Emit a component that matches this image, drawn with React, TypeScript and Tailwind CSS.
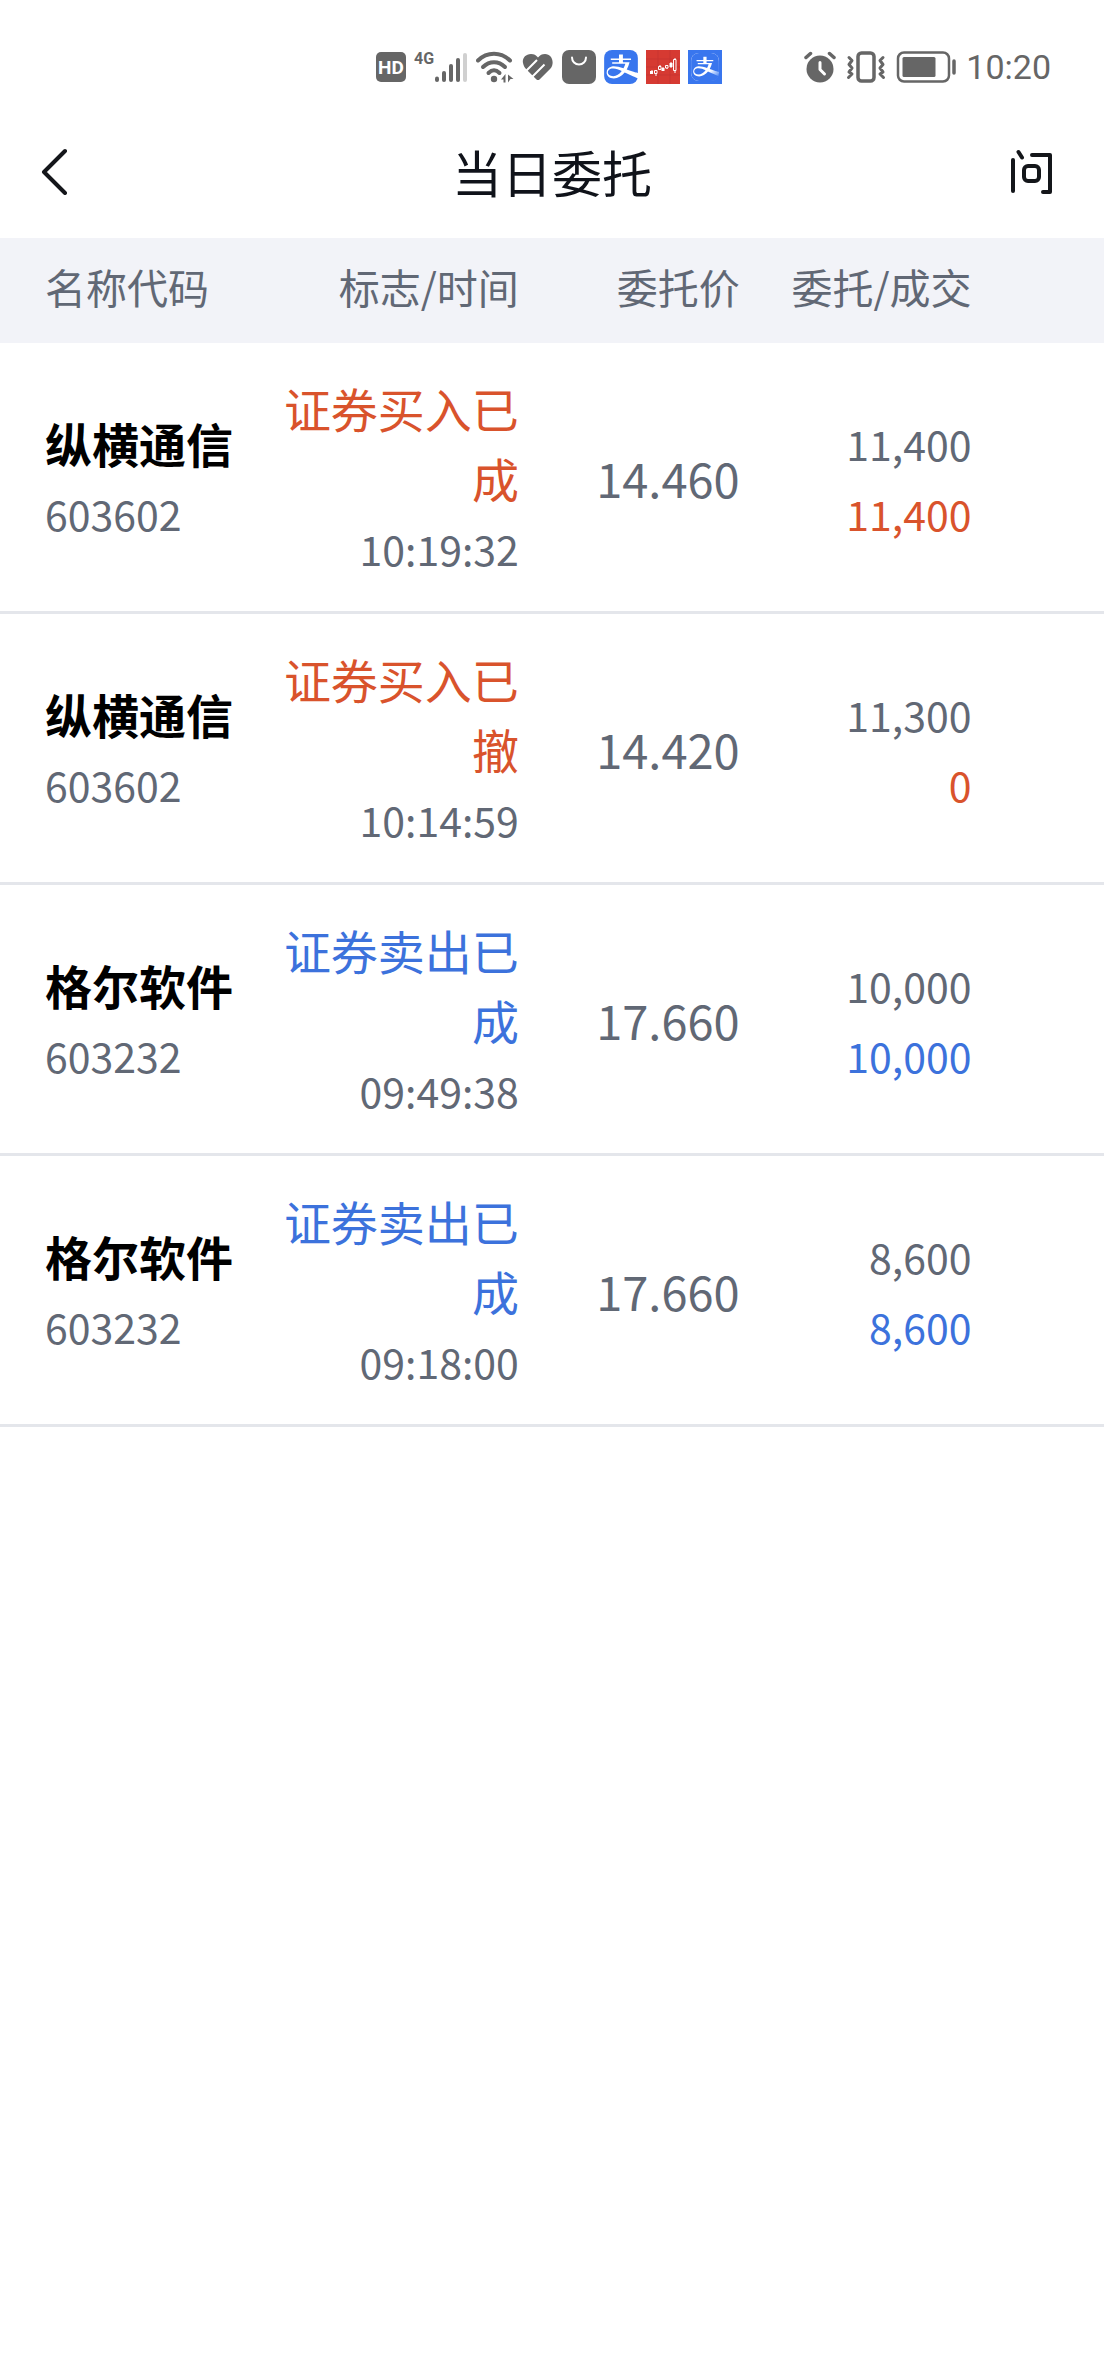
import { SiAlipay } from "react-icons/si";

type Side = "buy" | "sell";

type Order = {
  name: string;
  code: string;
  side: Side;
  status: string;
  time: string;
  price: string;
  ordered: string;
  filled: string;
};

const orders: Order[] = [
  { name: "纵横通信", code: "603602", side: "buy", status: "证券买入已成", time: "10:19:32", price: "14.460", ordered: "11,400", filled: "11,400" },
  { name: "纵横通信", code: "603602", side: "buy", status: "证券买入已撤", time: "10:14:59", price: "14.420", ordered: "11,300", filled: "0" },
  { name: "格尔软件", code: "603232", side: "sell", status: "证券卖出已成", time: "09:49:38", price: "17.660", ordered: "10,000", filled: "10,000" },
  { name: "格尔软件", code: "603232", side: "sell", status: "证券卖出已成", time: "09:18:00", price: "17.660", ordered: "8,600", filled: "8,600" },
];

const sideColor: Record<Side, string> = {
  buy: "text-[#d9532c]",
  sell: "text-[#3c72dc]",
};

function HdIcon() {
  return (
    <span className="flex h-[30px] w-[30px] items-center justify-center rounded-[5px] bg-[#666] font-[Roboto] text-[19px] font-bold leading-none text-white">
      HD
    </span>
  );
}

function SignalIcon() {
  return (
    <span className="flex h-8 items-start">
      <span className="font-[Roboto] text-[16px] font-bold leading-[16px] text-[#666]">4G</span>
      <svg width="34" height="32" viewBox="0 0 34 32" fill="none" strokeWidth="4" strokeLinecap="round" aria-hidden="true">
        <g stroke="#666">
          <path d="M3 27.500v1.500" />
          <path d="M10 22v7" />
          <path d="M17 15v14" />
          <path d="M24 9v20" />
        </g>
        <path d="M31 4v25" stroke="#d0d0d0" />
      </svg>
    </span>
  );
}

function WifiIcon() {
  return (
    <svg width="38" height="32" viewBox="0 0 38 32" fill="none" stroke="#666" strokeWidth="4" strokeLinecap="round" aria-hidden="true">
      <path d="M2 9.500C11 0.500 25 0.500 34 9.500" />
      <path d="M7 16C13.500 9.500 22.500 9.500 29 16" />
      <path d="M12.500 22C16 18.500 20 18.500 23.500 22" />
      <circle cx="18" cy="28" r="3.200" fill="#666" stroke="none" />
      <path d="M29.500 23v8.500h-2v-3h-2.500zM32 23.500l5.500 4.500h-3l-2.500 3.500z" fill="#666" stroke="none" />
    </svg>
  );
}

function HealthIcon() {
  return (
    <svg width="32" height="28" viewBox="0 0 32 28" fill="none" aria-hidden="true">
      <path
        d="M9 1C3 1 0 6 1 10C1.500 13 3 15 5 17L14.500 26.500Q16 27.500 17.500 26.500L28.500 15.500C33 10 30 1 23 1C20 1 18 2 16 4.500C14 2 12 1 9 1Z"
        fill="#666"
      />
      <path d="M3 19L15 7M9 25L22.500 11.500" stroke="#fff" strokeWidth="2" />
    </svg>
  );
}

function BagIcon() {
  return (
    <svg width="34" height="34" viewBox="0 0 34 34" fill="none" aria-hidden="true">
      <rect width="34" height="34" rx="7" fill="#666" />
      <path d="M10 7.500a7 7 0 0 0 14 0" stroke="#fff" strokeWidth="2" strokeLinecap="round" />
    </svg>
  );
}

function StocksIcon() {
  return (
    <svg width="34" height="34" viewBox="0 0 34 34" fill="none" aria-hidden="true">
      <rect width="34" height="34" fill="#d63a32" />
      <path d="M0 9h34M0 17h34M0 25h34M12 0v34M24 0v34" stroke="#c93530" />
      <path d="M6 20v4M10 20v6M14 15v5M17 17v4M21 15v4M25 12v6M29 8v15" stroke="#fff" />
      <path d="M4 21h3v3H4zM15.500 18h3v3h-3zM23.500 13h3v4h-3z" fill="#fff" />
      <path d="M8.500 20.500h2.500v3H8.500zM12.500 16.500h2.500v3h-2.500zM19.500 15.500h2.500v2.500h-2.500zM27.500 9.500h2.500v11h-2.500z" fill="#d63a32" stroke="#fff" />
    </svg>
  );
}

function AlarmIcon() {
  return (
    <svg width="32" height="32" viewBox="0 0 32 32" fill="none" strokeLinecap="round" aria-hidden="true">
      <circle cx="16" cy="18" r="13.500" fill="#666" />
      <path d="M2 6.500l4.500-4M30 6.500l-4.500-4" stroke="#666" strokeWidth="3.500" />
      <path d="M16 11.500v7l4.500 4.500" stroke="#fff" strokeWidth="3" strokeLinejoin="round" />
    </svg>
  );
}

function VibrateIcon() {
  return (
    <svg width="40" height="32" viewBox="0 0 40 32" fill="none" stroke="#666" strokeLinecap="round" strokeLinejoin="round" aria-hidden="true">
      <rect x="12" y="2" width="16" height="28" rx="3.500" strokeWidth="3.500" />
      <path d="M3 6.500l3 3-3 4 3 3.500-3 4 3 2-3.500 3.500M37 6.500l-3 3 3 4-3 3.500 3 4-3 2 3.500 3.500" strokeWidth="3" />
    </svg>
  );
}

function BatteryIcon() {
  return (
    <svg width="60" height="32" viewBox="0 0 60 32" fill="none" aria-hidden="true">
      <rect x="2" y="1.500" width="51" height="29" rx="6" stroke="#666" strokeWidth="2.500" />
      <rect x="6.500" y="6" width="33" height="20" rx="1.500" fill="#666" />
      <path d="M58 10v12" stroke="#666" strokeWidth="3.500" strokeLinecap="round" />
    </svg>
  );
}

function StatusBar() {
  return (
    <div className="flex h-[108px] items-center justify-between pl-[376px] pr-[53px] pt-[26px]">
      <div className="flex flex-1 items-center gap-2">
        <HdIcon />
        <SignalIcon />
        <WifiIcon />
        <HealthIcon />
        <BagIcon />
        <span className="overflow-hidden rounded-[8px] bg-white">
          <SiAlipay size={34} color="#3976ee" aria-hidden="true" />
        </span>
        <StocksIcon />
        <span className="flex h-[34px] w-[34px] items-center justify-center bg-[#3976ee]">
          <span className="overflow-hidden rounded-[8px] bg-linear-to-br from-white from-65% to-[#3976ee] to-95%">
            <SiAlipay size={28} color="#3976ee" aria-hidden="true" />
          </span>
        </span>
      </div>
      <div className="flex items-center gap-[10px]">
        <AlarmIcon />
        <VibrateIcon />
        <BatteryIcon />
        <span className="font-[Roboto] text-[34px] font-normal leading-none text-[#666]">10:20</span>
      </div>
    </div>
  );
}

function TitleBar() {
  return (
    <header className="flex h-[130px] items-center justify-between px-10 pb-1">
      <button type="button" aria-label="返回" className="w-14">
        <svg width="45" height="48" viewBox="0 0 45 48" fill="none" stroke="#14161a" strokeWidth="4" strokeLinecap="round" strokeLinejoin="round" aria-hidden="true">
          <path d="M25 4L4 25L25 46" />
        </svg>
      </button>
      <h1 className="text-[50px] font-normal leading-[70px] text-[#10131a]">当日委托</h1>
      <button type="button" aria-label="问" className="w-14">
        <svg width="45" height="48" viewBox="0 0 45 48" fill="none" stroke="#14161a" strokeWidth="4" strokeLinecap="round" strokeLinejoin="round" aria-hidden="true">
          <path d="M5 13v31" />
          <path d="M10.500 5l3.500 5.500" />
          <path d="M24 8h18v37h-7" />
          <rect x="16" y="19" width="15" height="15" rx="4" />
        </svg>
      </button>
    </header>
  );
}

function OrderRow({ order }: { order: Order }) {
  const tone = sideColor[order.side];
  return (
    <tr className="border-b-[3px] border-[#e4e6eb]">
      <td className="pb-7 pl-[45px] pt-[30px]">
        <div className="text-[47px] font-bold leading-[70px] text-black">{order.name}</div>
        <div>{order.code}</div>
      </td>
      <td className="pb-7 pt-[30px]">
        <div className={`text-[47px] leading-[70px] ${tone}`}>{order.status}</div>
        <div>{order.time}</div>
      </td>
      <td className="pb-7 pt-[30px] text-[47px]">{order.price}</td>
      <td className="pb-7 pt-[30px]">
        <div>{order.ordered}</div>
        <div className={tone}>{order.filled}</div>
      </td>
      <td />
    </tr>
  );
}

export default function App() {
  return (
    <main className="min-h-screen bg-white font-['Noto_Sans_CJK_SC',sans-serif]">
      <StatusBar />
      <TitleBar />
      <table className="w-full table-fixed border-collapse text-right text-[41px] leading-[70px] text-[#616875]">
        <colgroup>
          <col className="w-[25%]" />
          <col className="w-[22%]" />
          <col className="w-[20%]" />
          <col className="w-[21%]" />
          <col className="w-[12%]" />
        </colgroup>
        <thead className="bg-[#f2f3f8]">
          <tr className="h-[105px]">
            <th scope="col" className="pb-[10px] pl-[45px] text-left font-normal">名称代码</th>
            <th scope="col" className="pb-[10px] font-normal">标志/时间</th>
            <th scope="col" className="pb-[10px] font-normal">委托价</th>
            <th scope="col" className="pb-[10px] font-normal">委托/成交</th>
            <td />
          </tr>
        </thead>
        <tbody className="[&_td:first-child]:text-left">
          {orders.map((order) => (
            <OrderRow key={order.time} order={order} />
          ))}
        </tbody>
      </table>
    </main>
  );
}
